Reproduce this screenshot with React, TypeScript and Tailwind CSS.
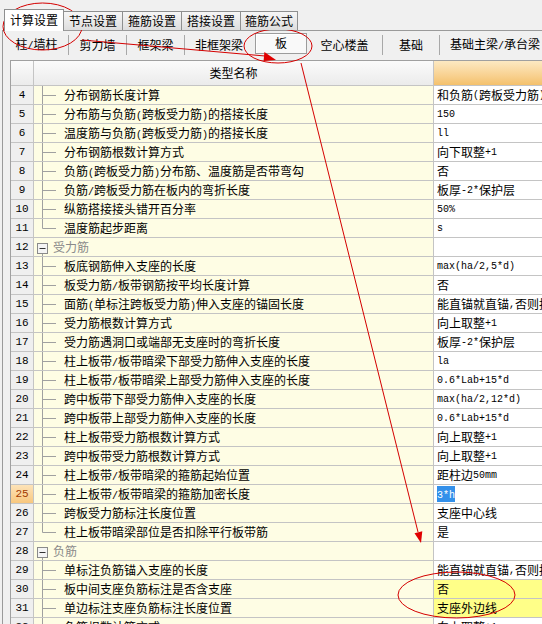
import React from "react";

type Row = {
  n: number;
  t: string;
  v?: string;
  k?: "item" | "last" | "group";
  hl?: boolean;
  sel?: boolean;
};

const rows: Row[] = [
  { n: 4, t: "分布钢筋长度计算", v: "和负筋(跨板受力筋)相同" },
  { n: 5, t: "分布筋与负筋(跨板受力筋)的搭接长度", v: "150" },
  { n: 6, t: "温度筋与负筋(跨板受力筋)的搭接长度", v: "ll" },
  { n: 7, t: "分布钢筋根数计算方式", v: "向下取整+1" },
  { n: 8, t: "负筋(跨板受力筋)分布筋、温度筋是否带弯勾", v: "否" },
  { n: 9, t: "负筋/跨板受力筋在板内的弯折长度", v: "板厚-2*保护层" },
  { n: 10, t: "纵筋搭接接头错开百分率", v: "50%" },
  { n: 11, t: "温度筋起步距离", v: "s", k: "last" },
  { n: 12, t: "受力筋", k: "group" },
  { n: 13, t: "板底钢筋伸入支座的长度", v: "max(ha/2,5*d)" },
  { n: 14, t: "板受力筋/板带钢筋按平均长度计算", v: "否" },
  { n: 15, t: "面筋(单标注跨板受力筋)伸入支座的锚固长度", v: "能直锚就直锚,否则按公式计算" },
  { n: 16, t: "受力筋根数计算方式", v: "向上取整+1" },
  { n: 17, t: "受力筋遇洞口或端部无支座时的弯折长度", v: "板厚-2*保护层" },
  { n: 18, t: "柱上板带/板带暗梁下部受力筋伸入支座的长度", v: "la" },
  { n: 19, t: "柱上板带/板带暗梁上部受力筋伸入支座的长度", v: "0.6*Lab+15*d" },
  { n: 20, t: "跨中板带下部受力筋伸入支座的长度", v: "max(ha/2,12*d)" },
  { n: 21, t: "跨中板带上部受力筋伸入支座的长度", v: "0.6*Lab+15*d" },
  { n: 22, t: "柱上板带受力筋根数计算方式", v: "向上取整+1" },
  { n: 23, t: "跨中板带受力筋根数计算方式", v: "向上取整+1" },
  { n: 24, t: "柱上板带/板带暗梁的箍筋起始位置", v: "距柱边50mm" },
  { n: 25, t: "柱上板带/板带暗梁的箍筋加密长度", v: "3*h", sel: true },
  { n: 26, t: "跨板受力筋标注长度位置", v: "支座中心线" },
  { n: 27, t: "柱上板带暗梁部位是否扣除平行板带筋", v: "是", k: "last" },
  { n: 28, t: "负筋", k: "group" },
  { n: 29, t: "单标注负筋锚入支座的长度", v: "能直锚就直锚,否则按公式计算" },
  { n: 30, t: "板中间支座负筋标注是否含支座", v: "否", hl: true },
  { n: 31, t: "单边标注支座负筋标注长度位置", v: "支座外边线", hl: true },
  { n: 32, t: "负筋根数计算方式", v: "向上取整+1" },
];

function Txt({ s }: { s: string }) {
  const parts = s.match(/[\x00-\x7f]+|[^\x00-\x7f]+/g) || [];
  return (
    <>
      {parts.map((p, i) =>
        /^[\x00-\x7f]+$/.test(p) ? (
          <span key={i} className="font-['Liberation_Mono',monospace] text-[10px]">
            {p}
          </span>
        ) : (
          <span key={i}>{p}</span>
        )
      )}
    </>
  );
}

function TreeIcon({ k }: { k: "item" | "last" | "group" }) {
  if (k === "group") {
    return (
      <svg width="18" height="18" className="shrink-0">
        <line x1="8.5" y1="14" x2="8.5" y2="18" stroke="#a0a0a0" />
        <rect x="3.5" y="5.5" width="10" height="10" fill="#f4f4f4" stroke="#8a8a8a" />
        <line x1="5.5" y1="10.5" x2="11.5" y2="10.5" stroke="#333" />
      </svg>
    );
  }
  return (
    <svg width="22" height="18" className="shrink-0">
      <line x1="8.5" y1="0" x2="8.5" y2={k === "last" ? 9.5 : 18} stroke="#a0a0a0" />
      <line x1="8.5" y1="9.5" x2="22" y2="9.5" stroke="#a0a0a0" />
    </svg>
  );
}

const tabs = ["计算设置", "节点设置", "箍筋设置", "搭接设置", "箍筋公式"];

export default function App() {
  return (
    <div className="relative w-[542px] h-[624px] overflow-hidden bg-[#f0f0f0] font-['Noto_Sans_CJK_SC',sans-serif] text-[12px] text-black">
      {/* Tab strip */}
      <div className="flex items-end h-[30px] pl-[4px] relative z-10">
        <div className="w-[60px] h-[22px] -mb-px bg-white border border-b-0 border-[#8e8f8f] flex items-center justify-center leading-none pb-[1px]">
          计算设置
        </div>
        {tabs.slice(1).map((t, i) => (
          <div
            key={t}
            className={`h-[19px] bg-linear-to-b from-[#f6f6f6] to-[#dedede] border-t border-r border-[#8e8f8f] flex items-center justify-center leading-none ${
              i === 3 ? "w-[57px]" : "w-[59px]"
            }`}
          >
            {t}
          </div>
        ))}
      </div>

      {/* Panel */}
      <div className="ml-[2px] border-l border-t border-[#9a9a9a] bg-[#f0f0f0]">
        {/* Toolbar */}
        <div className="flex items-center h-[27px] whitespace-nowrap">
          <div className="w-[65px] text-center pl-[2px]"><Txt s="柱/墙柱" /></div>
          <div className="w-px h-[20px] bg-[#a8a8a8]" />
          <div className="w-[57px] text-center">剪力墙</div>
          <div className="w-px h-[20px] bg-[#a8a8a8]" />
          <div className="w-[57px] text-center">框架梁</div>
          <div className="w-px h-[20px] bg-[#a8a8a8]" />
          <div className="w-[68px] text-center">非框架梁</div>
          <div className="w-[52px] h-[21px] mt-[-3px] ml-[2px] border border-[#9c9c9c] bg-[#f9f9f9] shadow-[inset_1px_1px_0_#ffffff] flex items-center justify-center">
            板
          </div>
          <div className="w-[75px] text-center">空心楼盖</div>
          <div className="w-px h-[20px] bg-[#a8a8a8]" />
          <div className="w-[56px] text-center">基础</div>
          <div className="w-px h-[20px] bg-[#a8a8a8]" />
          <div className="pl-[10px]"><Txt s="基础主梁/承台梁" /></div>
        </div>

        {/* Grid */}
        <div className="ml-[7px] mt-[2px] border-l border-t border-[#a0a0a0] bg-white">
          {/* Header */}
          <div className="flex h-[25px] border-b border-[#c4c4c4]">
            <div className="w-[23px] shrink-0 border-r border-[#c4c4c4] bg-linear-to-b from-[#fbfbfb] to-[#ebebeb]" />
            <div className="w-[400px] shrink-0 border-r border-[#c4c4c4] bg-linear-to-b from-[#fbfbfb] to-[#ebebeb] flex items-center justify-center">
              类型名称
            </div>
            <div className="flex-1 bg-linear-to-b from-[#fde9c2] to-[#f4c16c]" />
          </div>
          {/* Rows */}
          {rows.map((r) => {
            const k = r.k ?? "item";
            return (
              <div key={r.n} className="flex h-[19px] border-b border-[#c4c4c4] whitespace-nowrap">
                <div
                  className={`w-[23px] shrink-0 border-r border-[#c4c4c4] flex items-center justify-center font-['Liberation_Mono',monospace] text-[11px] ${
                    r.n === 25 ? "bg-linear-to-b from-[#fde3b8] to-[#f8c77e] text-[#a33a00]" : "bg-[#efefef]"
                  }`}
                >
                  {r.n}
                </div>
                <div className="w-[400px] shrink-0 border-r border-[#c4c4c4] bg-[#fefde4] flex items-center overflow-hidden">
                  <TreeIcon k={k} />
                  {k === "group" ? (
                    <span className="ml-[1px] text-[#8a8a8a]">{r.t}</span>
                  ) : (
                    <span className="ml-[8px]">
                      <Txt s={r.t} />
                    </span>
                  )}
                </div>
                <div
                  className={`flex-1 flex items-center pl-[3px] overflow-hidden ${
                    r.hl ? "bg-[#ffff88]" : "bg-white"
                  }`}
                >
                  {r.v &&
                    (r.sel ? (
                      <span className="bg-[#3390ea] text-white px-0 leading-[13px]">
                        <Txt s={r.v} />
                      </span>
                    ) : (
                      <Txt s={r.v} />
                    ))}
                </div>
              </div>
            );
          })}
        </div>
      </div>

      {/* Red annotations overlay */}
      <svg
        className="absolute inset-0 pointer-events-none"
        width="542"
        height="624"
        viewBox="0 0 542 624"
      >
        <g fill="none" stroke="#d40000" strokeWidth="1">
          <ellipse cx="42.5" cy="26.5" rx="39.5" ry="23.5" />
          <ellipse cx="278" cy="46" rx="34" ry="17" />
          <ellipse cx="456.5" cy="595" rx="58.5" ry="23" />
          <line x1="82" y1="40" x2="265" y2="56" />
          <line x1="301" y1="63" x2="418" y2="532" />
        </g>
        <g fill="#e00000">
          <polygon points="276,60 263.6,61 264.4,52" />
          <polygon points="421,543 414.5,533.3 422.3,531.3" />
        </g>
      </svg>
    </div>
  );
}
